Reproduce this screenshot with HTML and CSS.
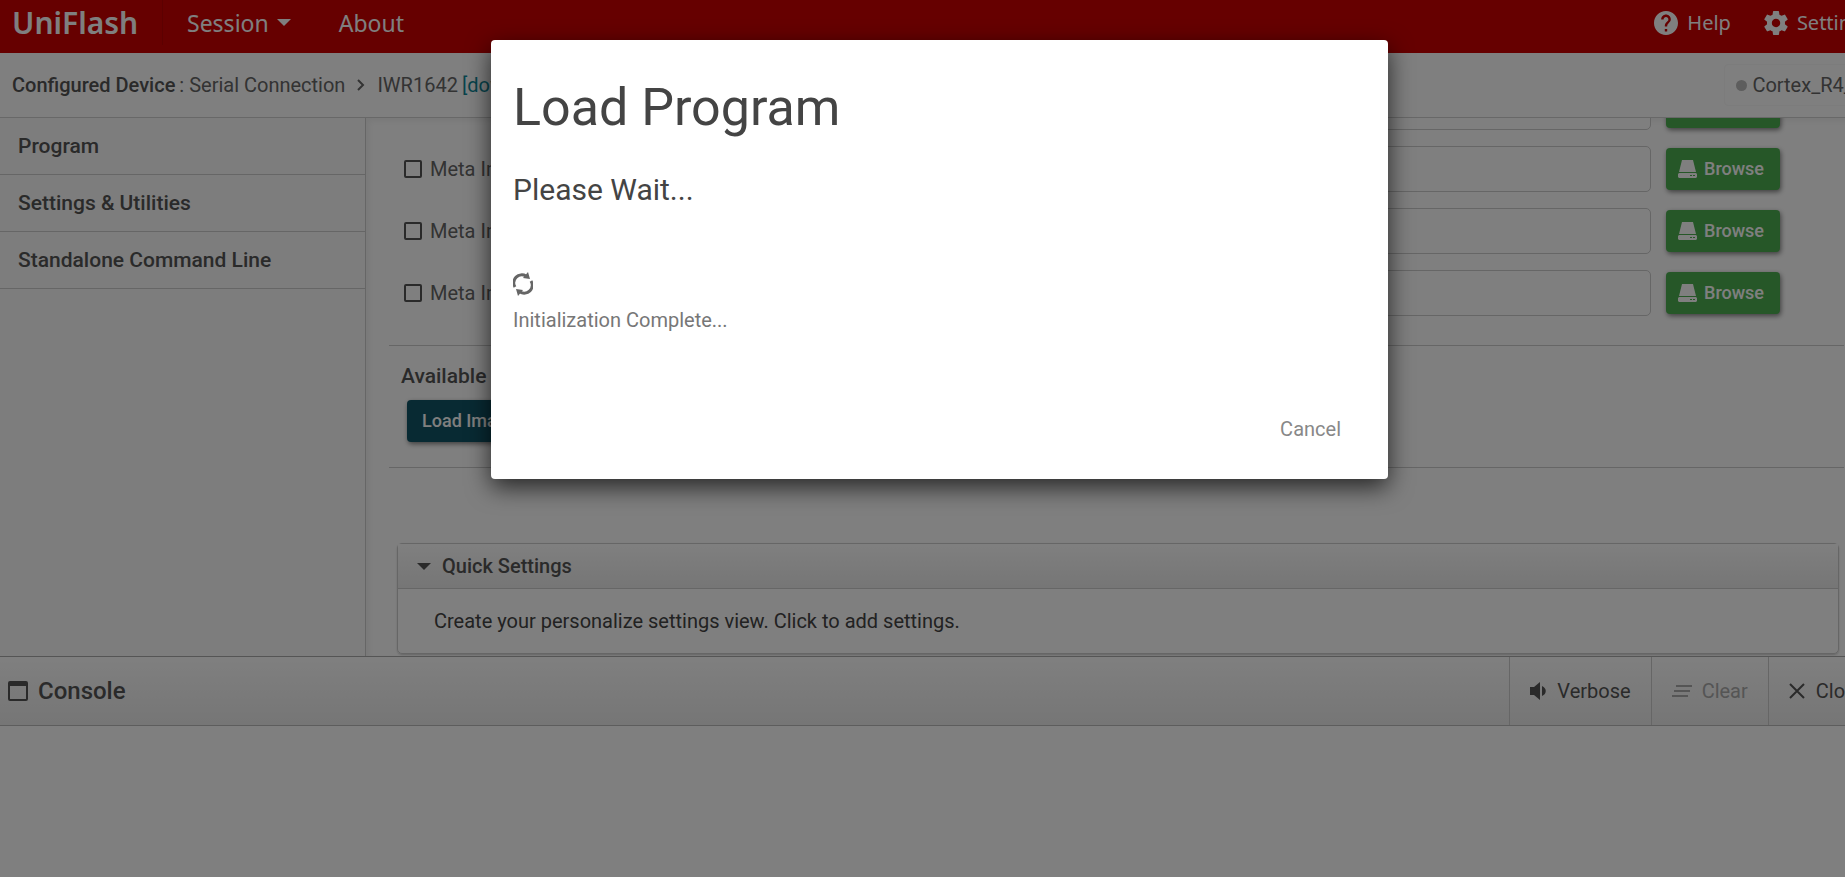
FILE: index.html
```
<!DOCTYPE html>
<html lang="en">
<head>
    <meta charset="UTF-8">
    <meta name="viewport" content="width=device-width, initial-scale=1.0">
    <title>UniFlash</title>
    <link rel="stylesheet" href="styles.css">
</head>
<body>
    <div class="app">
        <header class="topbar">
            <h1 class="brand">UniFlash</h1>
            <nav class="menu">
                <button class="menu-item">Session <span class="caret"></span></button>
                <button class="menu-item">About</button>
            </nav>
            <div class="tools">
                <button class="tool">
                    <svg viewBox="2 2 20 20" width="24" height="24"><path d="M12 2C6.48 2 2 6.48 2 12s4.48 10 10 10 10-4.48 10-10S17.52 2 12 2zm1 17h-2v-2h2v2zm2.07-7.75l-.9.92C13.45 12.9 13 13.5 13 15h-2v-.5c0-1.1.45-2.1 1.17-2.83l1.24-1.26c.37-.36.59-.86.59-1.41 0-1.1-.9-2-2-2s-2 .9-2 2H8c0-2.21 1.79-4 4-4s4 1.79 4 4c0 .88-.36 1.68-.93 2.25z"/></svg>
                    Help
                </button>
                <button class="tool">
                    <svg viewBox="2 2 20 20" width="24" height="24"><path d="M19.43 12.98c.04-.32.07-.64.07-.98s-.03-.66-.07-.98l2.11-1.65c.19-.15.24-.42.12-.64l-2-3.46c-.12-.22-.39-.3-.61-.22l-2.49 1c-.52-.4-1.08-.73-1.69-.98l-.38-2.65C14.46 2.18 14.25 2 14 2h-4c-.25 0-.46.18-.49.42l-.38 2.65c-.61.25-1.17.59-1.69.98l-2.49-1c-.23-.09-.49 0-.61.22l-2 3.46c-.13.22-.07.49.12.64l2.11 1.65c-.04.32-.07.65-.07.98s.03.66.07.98l-2.11 1.65c-.19.15-.24.42-.12.64l2 3.46c.12.22.39.3.61.22l2.49-1c.52.4 1.08.73 1.69.98l.38 2.65c.03.24.24.42.49.42h4c.25 0 .46-.18.49-.42l.38-2.65c.61-.25 1.17-.59 1.69-.98l2.49 1c.23.09.49 0 .61-.22l2-3.46c.12-.22.07-.49-.12-.64l-2.11-1.65zM12 15.5c-1.93 0-3.5-1.57-3.5-3.5s1.57-3.5 3.5-3.5 3.5 1.57 3.5 3.5-1.57 3.5-3.5 3.5z"/></svg>
                    Settings
                </button>
            </div>
        </header>

        <div class="device-bar">
            <strong>Configured Device</strong>
            <span>: Serial Connection</span>
            <svg class="chevron" viewBox="0 0 8 12" width="8" height="12"><path d="M1 1l5 5-5 5"/></svg>
            <span>IWR1642</span>
            <a href="#">[download ccxml]</a>
            <div class="core"><span class="dot"></span>Cortex_R4_0</div>
        </div>

        <div class="workspace">
            <nav class="sidebar">
                <a href="#">Program</a>
                <a href="#">Settings &amp; Utilities</a>
                <a href="#">Standalone Command Line</a>
            </nav>

            <main class="content">
                <div class="images">
                    <div class="image-row">
                        <input type="checkbox" id="meta1">
                        <label for="meta1">Meta Image 1</label>
                        <input type="text" aria-label="Meta Image 1 file">
                        <button class="btn browse"><svg viewBox="0 0 19 18" width="19" height="18"><path d="M4 0h11l3 12H1zM1 13h17l1 1v3l-1 1H1l-1-1v-3z"/><path class="led" d="M12 15h2v1h-2zM15 15h2v1h-2z"/></svg>Browse</button>
                    </div>
                    <div class="image-row">
                        <input type="checkbox" id="meta2">
                        <label for="meta2">Meta Image 2</label>
                        <input type="text" aria-label="Meta Image 2 file">
                        <button class="btn browse"><svg viewBox="0 0 19 18" width="19" height="18"><path d="M4 0h11l3 12H1zM1 13h17l1 1v3l-1 1H1l-1-1v-3z"/><path class="led" d="M12 15h2v1h-2zM15 15h2v1h-2z"/></svg>Browse</button>
                    </div>
                    <div class="image-row">
                        <input type="checkbox" id="meta3">
                        <label for="meta3">Meta Image 3</label>
                        <input type="text" aria-label="Meta Image 3 file">
                        <button class="btn browse"><svg viewBox="0 0 19 18" width="19" height="18"><path d="M4 0h11l3 12H1zM1 13h17l1 1v3l-1 1H1l-1-1v-3z"/><path class="led" d="M12 15h2v1h-2zM15 15h2v1h-2z"/></svg>Browse</button>
                    </div>
                    <div class="image-row">
                        <input type="checkbox" id="meta4">
                        <label for="meta4">Meta Image 4</label>
                        <input type="text" aria-label="Meta Image 4 file">
                        <button class="btn browse"><svg viewBox="0 0 19 18" width="19" height="18"><path d="M4 0h11l3 12H1zM1 13h17l1 1v3l-1 1H1l-1-1v-3z"/><path class="led" d="M12 15h2v1h-2zM15 15h2v1h-2z"/></svg>Browse</button>
                    </div>
                </div>

                <section class="actions">
                    <h2>Available Action(s)</h2>
                    <button class="btn load">Load Image</button>
                </section>

                <section class="panel">
                    <h2 class="panel-head"><span class="caret"></span>Quick Settings</h2>
                    <p>Create your personalize settings view. Click to add settings.</p>
                </section>
            </main>
        </div>

        <section class="console">
            <div class="console-bar">
                <h2>
                    <svg viewBox="0 0 20 20" width="20" height="20"><path fill-rule="evenodd" d="M2 0h16a2 2 0 0 1 2 2v16a2 2 0 0 1-2 2H2a2 2 0 0 1-2-2V2a2 2 0 0 1 2-2zM2 5v13h16V5z"/></svg>
                    Console
                </h2>
                <button class="console-btn">
                    <svg viewBox="0 0 16 18" width="16" height="18"><path d="M0 5h4l6-5v18l-6-5H0zM12 4c5 2 5 8 0 10z"/></svg>
                    Verbose
                </button>
                <button class="console-btn clear" disabled>
                    <svg viewBox="0 0 20 12" width="20" height="12"><path d="M4 0h16v2H4zM2 5h16v2H2zM0 10h16v2H0z"/></svg>
                    Clear
                </button>
                <button class="console-btn close">
                    <svg viewBox="0 0 16 16" width="16" height="16"><path d="M1 1l14 14M15 1L1 15"/></svg>
                    Close
                </button>
            </div>
        </section>

        <div class="overlay">
            <div class="dialog" role="dialog" aria-labelledby="dialog-title">
                <h2 id="dialog-title">Load Program</h2>
                <h3>Please Wait...</h3>
                <svg class="spinner" viewBox="0 0 20 24" width="20" height="24"><path class="arc" d="M2 15A8 8 0 0 1 13 4M18 9A8 8 0 0 1 7 20"/><path d="M15 0l2 7-7-1zM5 24l-2-7 7 1z"/></svg>
                <p>Initialization Complete...</p>
                <div class="dialog-actions">
                    <button>Cancel</button>
                </div>
            </div>
        </div>
    </div>
</body>
</html>
```
FILE: styles.css
```
* {
    box-sizing: border-box;
}

body {
    margin: 0;
    overflow: hidden;
    font-family: Roboto, "Liberation Sans", sans-serif;
    font-size: 20px;
    line-height: 24px;
    color: #555;
    background-color: #fff;
}

h1, h2, h3, p {
    margin: 0;
    font-weight: 500;
}

button {
    font: inherit;
    color: inherit;
    background: none;
    border: none;
    padding: 0;
    cursor: pointer;
}

a {
    text-decoration: none;
}

svg {
    fill: currentColor;
    flex: none;
}

/* slightly wider than the window, the right end runs off screen */
.app {
    position: relative;
    display: flex;
    flex-direction: column;
    width: calc(100% + 34px);
    height: 100vh;
    overflow: hidden;
    white-space: nowrap;
}

.caret {
    display: inline-block;
    border: 7px solid transparent;
    border-top-color: currentColor;
    border-bottom: none;
}

/* top bar */
.topbar {
    display: flex;
    align-items: center;
    height: 53px;
    padding-bottom: 8px;
    padding-left: 12px;
    padding-right: 6px;
    background-color: #c00;
    color: #fff;
    font-family: "Noto Sans", sans-serif;
}

.brand {
    width: 151px;
    border-right: 1px solid #b80000;
    font-size: 30px;
    font-weight: 600;
    line-height: 45px;
}

.menu {
    display: flex;
    gap: 48px;
    padding-left: 24px;
    font-size: 23px;
}

.menu-item {
    display: flex;
    align-items: center;
    gap: 8px;
}

.tools {
    display: flex;
    gap: 33px;
    margin-left: auto;
    font-size: 20px;
}

.tool {
    display: flex;
    align-items: center;
    gap: 9px;
}

/* device bar */
.device-bar {
    display: flex;
    align-items: center;
    gap: 4px;
    height: 65px;
    padding: 0 3px 0 12px;
    border-bottom: 1px solid #d0d0d0;
    color: #666;
}

.device-bar strong {
    font-weight: 500;
    color: #555;
}

.device-bar a {
    color: #118899;
}

.chevron {
    margin: 0 8px;
    fill: none;
    stroke: currentColor;
    stroke-width: 2;
}

.core {
    display: flex;
    align-items: center;
    gap: 5px;
    height: 42px;
    margin-left: auto;
    padding: 0 11px;
    border: 1px solid #f8f8f8;
    border-radius: 4px;
}

.dot {
    width: 11px;
    height: 11px;
    border-radius: 50%;
    background-color: #bbb;
}

/* sidebar + content */
.workspace {
    display: flex;
    flex: 1;
    min-height: 0;
}

.sidebar {
    width: 366px;
    background-color: #fafafa;
    border-right: 1px solid #ccc;
}

.sidebar a {
    display: block;
    padding: 16px 18px;
    border-bottom: 1px solid #ccc;
    color: #555;
    font-size: 21px;
    font-weight: 500;
}

.content {
    display: flex;
    flex: 1;
    flex-direction: column;
    justify-content: flex-end;
    overflow: hidden;
    padding: 0 35px 2px 23px;
    box-shadow: inset 3px 3px 6px rgba(0, 0, 0, 0.06);
}

.images {
    display: flex;
    flex: none;
    flex-direction: column;
    gap: 16px;
    padding: 0 64px 29px 15px;
}

.image-row {
    display: flex;
    align-items: center;
    height: 46px;
}

.image-row label {
    width: 150px;
    margin-left: 8px;
    color: #666;
}

.image-row input[type="checkbox"] {
    appearance: none;
    width: 18px;
    height: 18px;
    margin: 0;
    border: 2px solid #555;
    border-radius: 2px;
}

.image-row input[type="text"] {
    flex: 1;
    height: 46px;
    border: 1px solid #ccc;
    border-radius: 5px;
    background-color: #fff;
    font: inherit;
}

.btn {
    height: 42px;
    border-radius: 4px;
    color: #fff;
    font-size: 18px;
    font-weight: 500;
    box-shadow: 1px 2px 5px rgba(0, 0, 0, 0.5);
}

.browse {
    display: flex;
    align-items: center;
    gap: 7px;
    margin-left: 15px;
    padding: 0 16px 0 12px;
    background-color: #4caf50;
}

.browse .led {
    fill: #4caf50;
}

.actions {
    flex: none;
    height: 123px;
    padding: 18px 12px;
    border-top: 1px solid #ccc;
    border-bottom: 1px solid #ccc;
}

.actions h2 {
    margin-bottom: 12px;
    font-size: 21px;
}

.load {
    margin-left: 6px;
    padding: 0 15px;
    background-color: #156;
}

.panel {
    flex: none;
    margin-top: 75px;
    margin-left: 8px;
    margin-right: 5px;
    border: 1px solid #ccc;
    border-radius: 5px;
    box-shadow: 0 1px 2px rgba(0, 0, 0, 0.2);
}

.panel-head {
    display: flex;
    align-items: center;
    gap: 11px;
    height: 45px;
    padding-left: 19px;
    border-bottom: 1px solid #ccc;
    background: linear-gradient(#fff, #ececec);
    font-size: 20px;
}

.panel p {
    padding: 20px 36px;
    color: #444;
    font-weight: 400;
}

/* console */
.console {
    height: 221px;
    border-top: 1px solid #aaa;
}

.console-bar {
    display: flex;
    height: 69px;
    border-bottom: 1px solid #bbb;
    background: linear-gradient(#fff, #ececec);
}

.console-bar h2 {
    display: flex;
    align-items: center;
    gap: 10px;
    margin-right: auto;
    padding-left: 8px;
    font-size: 24px;
}

.console-btn {
    display: flex;
    align-items: center;
    gap: 11px;
    padding: 0 20px;
    border-left: 1px solid #ccc;
}

.console-btn.clear {
    gap: 10px;
    color: #aaa;
}

.console-btn.close {
    padding-right: 13px;
}

.console-btn.close svg {
    stroke: currentColor;
    stroke-width: 2;
}

/* dialog */
.overlay {
    position: absolute;
    inset: 0;
    display: flex;
    align-items: flex-start;
    justify-content: center;
    padding-top: 40px;
    background-color: rgba(0, 0, 0, 0.5);
}

.dialog {
    display: flex;
    flex-direction: column;
    width: 897px;
    padding: 38px 22px;
    border-radius: 4px;
    background-color: #fff;
    box-shadow: 0 8px 24px rgba(0, 0, 0, 0.7);
}

.dialog h2 {
    font-size: 52px;
    font-weight: 400;
    line-height: 60px;
    color: #444;
}

.dialog h3 {
    margin-top: 34px;
    font-size: 30px;
    font-weight: 400;
    line-height: 36px;
    color: #444;
}

.spinner {
    margin-top: 64px;
    color: #666;
}

.spinner .arc {
    fill: none;
    stroke: currentColor;
    stroke-width: 3;
}

.dialog p {
    margin-top: 12px;
    font-weight: 400;
    color: #777;
}

.dialog-actions {
    display: flex;
    justify-content: flex-end;
    margin-top: 85px;
    padding-right: 25px;
    color: #888;
}
```
